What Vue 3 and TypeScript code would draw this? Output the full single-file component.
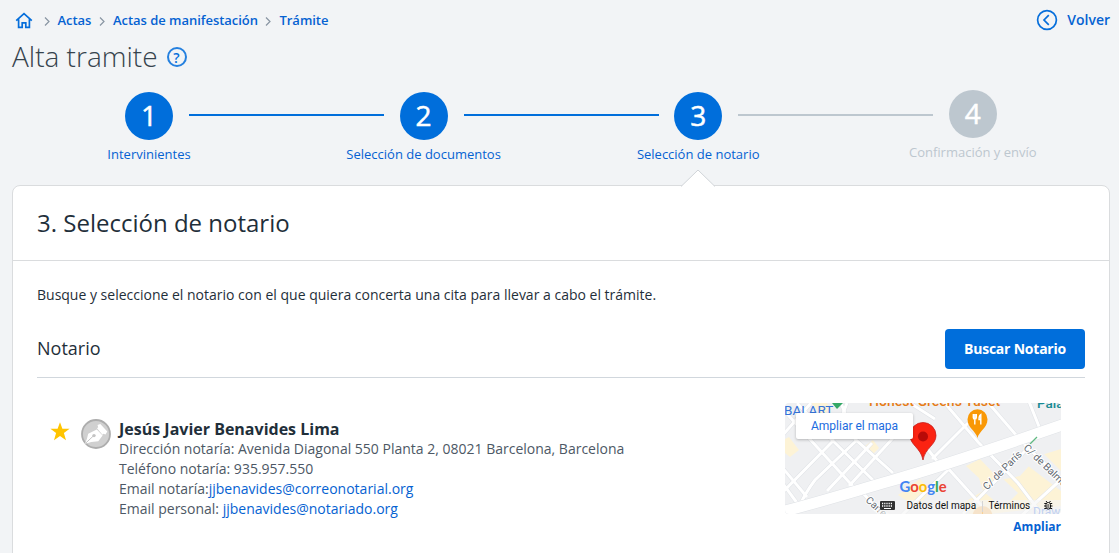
<template>
  <div class="page">
    <header class="topbar">
      <nav class="breadcrumb">
        <svg class="home" width="18" height="17" viewBox="0 0 18 17">
          <path d="M1.200 8.600 9 1.600l7.800 7M3.600 7.200v8.200h3.600v-4.600h3.600v4.600h3.600V7.200" />
        </svg>
        <template v-for="crumb in crumbs" :key="crumb">
          <svg class="chevron" width="6" height="9" viewBox="0 0 6 9">
            <path d="m1 .5 4 4-4 4" />
          </svg>
          <a>{{ crumb }}</a>
        </template>
      </nav>
      <a class="back">
        <svg width="22" height="22" viewBox="0 0 22 22">
          <circle cx="11" cy="11" r="9.400" />
          <path d="m12.800 6.200-4.800 4.800 4.800 4.800" />
        </svg>
        <span>Volver</span>
      </a>
    </header>

    <div class="title-row">
      <h1>Alta tramite</h1>
      <span class="help">?</span>
    </div>

    <div class="stepper">
      <template v-for="(step, i) in steps" :key="step.label">
        <div v-if="i > 0" class="line" :class="{ disabled: !step.active }"></div>
        <div class="step" :class="{ disabled: !step.active }">
          <span class="bubble">{{ i + 1 }}</span>
          <span class="label">{{ step.label }}</span>
        </div>
      </template>
    </div>

    <main class="card">
      <svg class="pointer" width="36" height="18" viewBox="0 0 36 18">
        <path d="M1 17.500 18 1l17 16.500" />
      </svg>
      <h2>3. Selección de notario</h2>
      <section class="content">
        <p class="intro">Busque y seleccione el notario con el que quiera concerta una cita para llevar a cabo el trámite.</p>
        <div class="section-head">
          <h3>Notario</h3>
          <button type="button">Buscar Notario</button>
        </div>

        <div class="notary">
          <svg class="star" width="20" height="19" viewBox="0 0 20 19">
            <path d="m10 .2 2.400 6.500 7.200.1-5.700 4.300 2.100 7.100-6-4.100-6 4.100 2.100-7.100L.4 6.800l7.200-.1z" />
          </svg>
          <svg class="seal" width="30" height="30" viewBox="0 0 30 30">
            <circle cx="15" cy="15" r="14" fill="#d0d0d0" stroke="#adadad" stroke-width="1.800" />
            <path d="M4 24.800Q6 21 7.200 14.800l8.600-4.300 5.800 6-4.300 5.700Q10 22.500 4 24.800z" fill="#fff" />
            <path d="m16 9.300 1.200-1L16.500 6l2.800-1 7 7.500-1.800 3-2-.8-1 1z" fill="#fff" />
            <path d="m4.500 24.300 7.600-7.100" stroke="#c4c4c4" stroke-width="1" />
            <circle cx="13" cy="16.600" r="1.700" fill="#c4c4c4" />
          </svg>
          <div class="details">
            <strong>Jesús Javier Benavides Lima</strong>
            <span>Dirección notaría: Avenida Diagonal 550 Planta 2, 08021 Barcelona, Barcelona</span>
            <span>Teléfono notaría: 935.957.550</span>
            <span>Email notaría:<a>jjbenavides@correonotarial.org</a></span>
            <span>Email personal: <a>jjbenavides@notariado.org</a></span>
          </div>
          <div class="map-col">
            <div class="map">
              <svg width="276" height="111" viewBox="0 0 276 111">
                <rect width="276" height="111" fill="#eff0f2" />
                <!-- built-up blocks -->
                <g fill="#fdf3d6">
                  <path d="M0 36l4-2 10 13-9 7-5-4zM26 0h16l4 5-9 8zM88 37l6 8-6 6-8-8zM113 92l22-16 10 12-12 17zM181 63l14-7 20 21 20-4 18-20 23-7v57l-90 10-8-13 20-12-4-13z" />
                </g>
                <g fill="#eff0f2">
                  <path d="M199 89l17-15 17 16-15 15zM234 56l16-14 26 26v20z" />
                </g>
                <!-- streets -->
                <g class="roads">
                  <path v-for="d in streets" :key="d" :d="d" />
                </g>
                <g class="roads-core">
                  <path v-for="d in streets" :key="d" :d="d" />
                </g>
                <path d="M-4 109 C35 99 70 88 105 78 S225 40 280 21" class="avenue-edge" />
                <path d="M-4 109 C35 99 70 88 105 78 S225 40 280 21" class="avenue" />
                <path d="M245 41l7-7" stroke="#5fb981" stroke-width="1.200" />
                <path d="M47 0h11l-6 6z" fill="#34a866" />

                <text x="-1" y="12" class="metro">BALART</text>
                <text x="84" y="3" class="food">Honest Greens Tuset</text>
                <text x="252" y="5" class="palace">Palau</text>
                <text x="248" y="113" class="shop">Draw</text>
                <text class="street" transform="translate(202 87.500) rotate(-45)">C/ de París</text>
                <text class="street" transform="translate(238 45.500) rotate(44)">C/ de Balmes</text>
                <text class="street" transform="translate(80 98) rotate(42)">Carrer</text>

                <!-- restaurant pin -->
                <path d="M192.500 35c-1.500-7-10-10-10-18.800a10 10 0 0 1 20 0c0 8.800-8.500 11.800-10 18.800z" fill="#f99806" />
                <path d="M188.300 11v3.500q0 1.700 1.500 1.700t1.500-1.700V11M189.800 11v10.500M195.800 21.500V11.500q-1.800 1-1.800 5h1.800" stroke="#fff" stroke-width="1.400" fill="none" />
                <circle cx="197.500" cy="113" r="10" fill="#f8c98a" />
                <path d="M197.500 104v7" stroke="#f99806" />

                <!-- selected office pin -->
                <path d="M138 57c-2-12-13-15-13-24.500a13 13 0 0 1 26 0C151 42 140 45 138 57z" fill="#fb2312" stroke="#c5221f" stroke-width=".8" />
                <circle cx="138" cy="33.500" r="5" fill="#b80a08" />

                <text x="114.500" y="88.500" class="google"><tspan fill="#4285f4">G</tspan><tspan fill="#ea4335">o</tspan><tspan fill="#fbbc05">o</tspan><tspan fill="#4285f4">g</tspan><tspan fill="#34a853">l</tspan><tspan fill="#ea4335">e</tspan></text>

                <rect x="93" y="97" width="183" height="14" fill="#f5f5f5" fill-opacity=".6" />
                <rect x="95" y="98" width="15" height="9" rx="1" fill="#333" />
                <path d="M97 100.500h11M97 103h11" stroke="#fff" stroke-width="1.300" stroke-dasharray="1.200 1" />
                <path d="M99 105.500h7" stroke="#fff" />
                <text x="121.500" y="106" class="legal">Datos del mapa</text>
                <path d="M197.500 98v11" stroke="#d5d5d5" />
                <text x="203.500" y="106" class="legal">Términos</text>
                <g class="bug">
                  <rect x="261" y="99.500" width="4.500" height="6.500" rx="2" />
                  <path d="M259.300 100.500h2M265.200 100.500h2M259 103h2.300M265.200 103h2.300M259.300 105.500h2M265.200 105.500h2M261 98l1 1.300M265.500 98l-1 1.300M262.200 102h2.200M262.200 104h2.200" />
                </g>
              </svg>
              <span class="enlarge">Ampliar el mapa</span>
            </div>
            <a class="zoom-link">Ampliar</a>
          </div>
        </div>
      </section>
    </main>
  </div>
</template>

<script setup lang="ts">
interface Step {
  label: string
  active: boolean
}

const crumbs: string[] = ['Actas', 'Actas de manifestación', 'Trámite']

const steps: Step[] = [
  { label: 'Intervinientes', active: true },
  { label: 'Selección de documentos', active: true },
  { label: 'Selección de notario', active: true },
  { label: 'Confirmación y envío', active: false }
]

// Trazado de las calles secundarias del mapa
const streets: string[] = [
  'M-4 4 L22 33 L74 90',
  'M12 0 L45 35 L92 81',
  'M56 0 L70 36 L108 70',
  'M-4 63 L22 94',
  'M-4 78 L15 104',
  'M26 0 L-4 34',
  'M62 0 L47 39 L-4 91',
  'M72 37 L30 77 Q20 90 12 108',
  'M87 40 L42 88',
  'M108 35 L64 83',
  'M125 0 L150 16',
  'M138 40 L152 58',
  'M158 -2 L193 39 L233 80 L258 113',
  'M200 -4 L231 32',
  'M243 -4 L255 26',
  'M183 20 L147 56',
  'M160 62 L206 113',
  'M164 66 L116 113',
  'M246 42 L178 111',
  'M238 40 L280 80',
  'M280 73 L236 113',
  'M76 88 L98 112'
]
</script>

<style>
body {
  background: #f2f4f6;
}
</style>

<style scoped>
.page {
  box-sizing: border-box;
  height: 553px;
  padding: 0 9px 0 12px;
  overflow: hidden;
  background: #f2f4f6;
  color: #1f2f3a;
  font-family: 'Open Sans', 'Noto Sans', sans-serif;
}

h1,
h2,
h3,
p {
  margin: 0;
}

a {
  color: #0562d2;
}

.topbar {
  display: flex;
  align-items: center;
  justify-content: space-between;
  height: 40px;
}

.breadcrumb {
  display: flex;
  align-items: center;
  padding-left: 3px;
  font-size: 13px;
  font-weight: 600;
}

.home,
.back svg {
  fill: none;
  stroke: #056edb;
  stroke-width: 1.7;
}

.chevron {
  margin: 0 8px 0 7.5px;
  padding-top: 2px;
  fill: none;
  stroke: #8895a2;
  stroke-width: 1.2;
}

.home + .chevron {
  margin: 0 8px 0 10.5px;
}

.breadcrumb a {
  letter-spacing: -0.03px;
}

.back {
  display: flex;
  align-items: center;
  gap: 9px;
  font-size: 14px;
  font-weight: 600;
}

.back span {
  margin-top: -1px;
}

.title-row {
  display: flex;
  align-items: center;
  gap: 9px;
  height: 34px;
}

h1 {
  margin-top: -3px;
  color: #36434d;
  font-size: 28px;
  font-weight: 300;
  line-height: 34px;
}

.help {
  display: flex;
  align-items: center;
  justify-content: center;
  box-sizing: border-box;
  width: 20px;
  height: 20px;
  border: 2px solid #2580df;
  border-radius: 50%;
  color: #056edb;
  font-size: 14px;
  font-weight: 600;
}

.stepper {
  display: flex;
  height: 111px;
  padding: 18px 0 0 112px;
  box-sizing: border-box;
}

.step {
  display: flex;
  flex-direction: column;
  align-items: center;
  width: 50px;
  color: #0562d2;
}

.step.disabled {
  margin-top: -2px;
  color: #bdc7cf;
}

.bubble {
  display: flex;
  align-items: center;
  justify-content: center;
  box-sizing: border-box;
  width: 48px;
  height: 48px;
  padding-bottom: 2px;
  border-radius: 50%;
  background: #006edb;
  color: #fff;
  font-size: 28px;
  font-weight: 500;
  -webkit-text-stroke: 0.5px #fff;
}

.disabled .bubble {
  background: #bdc7cf;
}

.label {
  margin-top: 5px;
  font-size: 13px;
  line-height: 18px;
  white-space: nowrap;
}

.line {
  width: 195px;
  height: 2px;
  margin: 22px 14.6px 0 15px;
  background: #006edb;
}

.line.disabled {
  background: #bdc7cf;
}

.card {
  position: relative;
  box-sizing: border-box;
  width: 1098px;
  height: 400px;
  border: 1px solid #dadcde;
  border-radius: 8px;
  background: #fff;
}

.pointer {
  position: absolute;
  top: -17px;
  left: 667px;
  fill: #fff;
  stroke: #d0d4d8;
}

h2 {
  height: 74px;
  padding-left: 24px;
  border-bottom: 1px solid #dadcde;
  font-size: 24px;
  font-weight: 400;
  line-height: 74px;
}

.content {
  padding: 24px 24px 0;
}

.intro {
  font-size: 14px;
  line-height: 20px;
}

.section-head {
  display: flex;
  align-items: center;
  justify-content: space-between;
  height: 40px;
  margin-top: 24px;
  padding-bottom: 8px;
  border-bottom: 1px solid #d1d7dd;
}

h3 {
  margin-top: -2px;
  font-size: 18px;
  font-weight: 400;
}

button {
  width: 140px;
  height: 40px;
  padding: 0 0 1px;
  border: 0;
  border-radius: 4px;
  background: #006edb;
  color: #fff;
  font-family: inherit;
  font-size: 14px;
  font-weight: 700;
  letter-spacing: -0.22px;
}

.notary {
  display: flex;
  padding: 25px 24px 0 12px;
}

.star {
  margin: 19px 0 0 1px;
  fill: #ffc400;
}

.seal {
  margin: 16px 8px 0 11px;
}

.details {
  display: flex;
  flex: 1;
  flex-direction: column;
  padding-top: 16px;
  color: #4d5865;
  font-size: 14px;
  line-height: 20px;
}

.details strong {
  color: #1f2f3a;
  font-size: 16px;
  font-weight: 700;
}

.map-col {
  width: 276px;
  text-align: right;
}

.map {
  position: relative;
  height: 111px;
  overflow: hidden;
  border-radius: 4px;
}

.map svg {
  display: block;
  font-family: Roboto, sans-serif;
}

.roads,
.roads-core,
.avenue,
.avenue-edge {
  fill: none;
  stroke: #dfe2e6;
  stroke-width: 4;
}

.roads-core {
  stroke: #fff;
  stroke-width: 3;
}

.avenue-edge {
  stroke-width: 12;
}

.avenue {
  stroke: #fff;
  stroke-width: 11;
}

.metro {
  fill: #3574d8;
  font-size: 13.5px;
}

.food {
  fill: #e67c16;
  font-size: 14px;
  font-weight: 500;
}

.palace {
  fill: #168a94;
  font-size: 13.5px;
  font-weight: 500;
}

.shop {
  fill: #6e97e8;
  font-size: 12px;
}

.street {
  fill: #646b73;
  stroke: #fff;
  stroke-width: 2;
  paint-order: stroke;
  font-size: 10.2px;
}

.google {
  font-family: Lato, sans-serif;
  font-size: 14.8px;
  font-weight: 700;
}

.legal {
  fill: #111;
  font-size: 10px;
}

.bug {
  fill: none;
  stroke: #111;
}

.enlarge {
  position: absolute;
  top: 10px;
  left: 11px;
  width: 117px;
  height: 26px;
  border-radius: 2px;
  background: #fff;
  box-shadow: 0 1px 3px rgba(0, 0, 0, 0.25);
  color: #1a6be0;
  font-family: Roboto, sans-serif;
  font-size: 12px;
  line-height: 26px;
  text-align: center;
}

.zoom-link {
  display: block;
  font-size: 12px;
  font-weight: 700;
  line-height: 25px;
}
</style>
